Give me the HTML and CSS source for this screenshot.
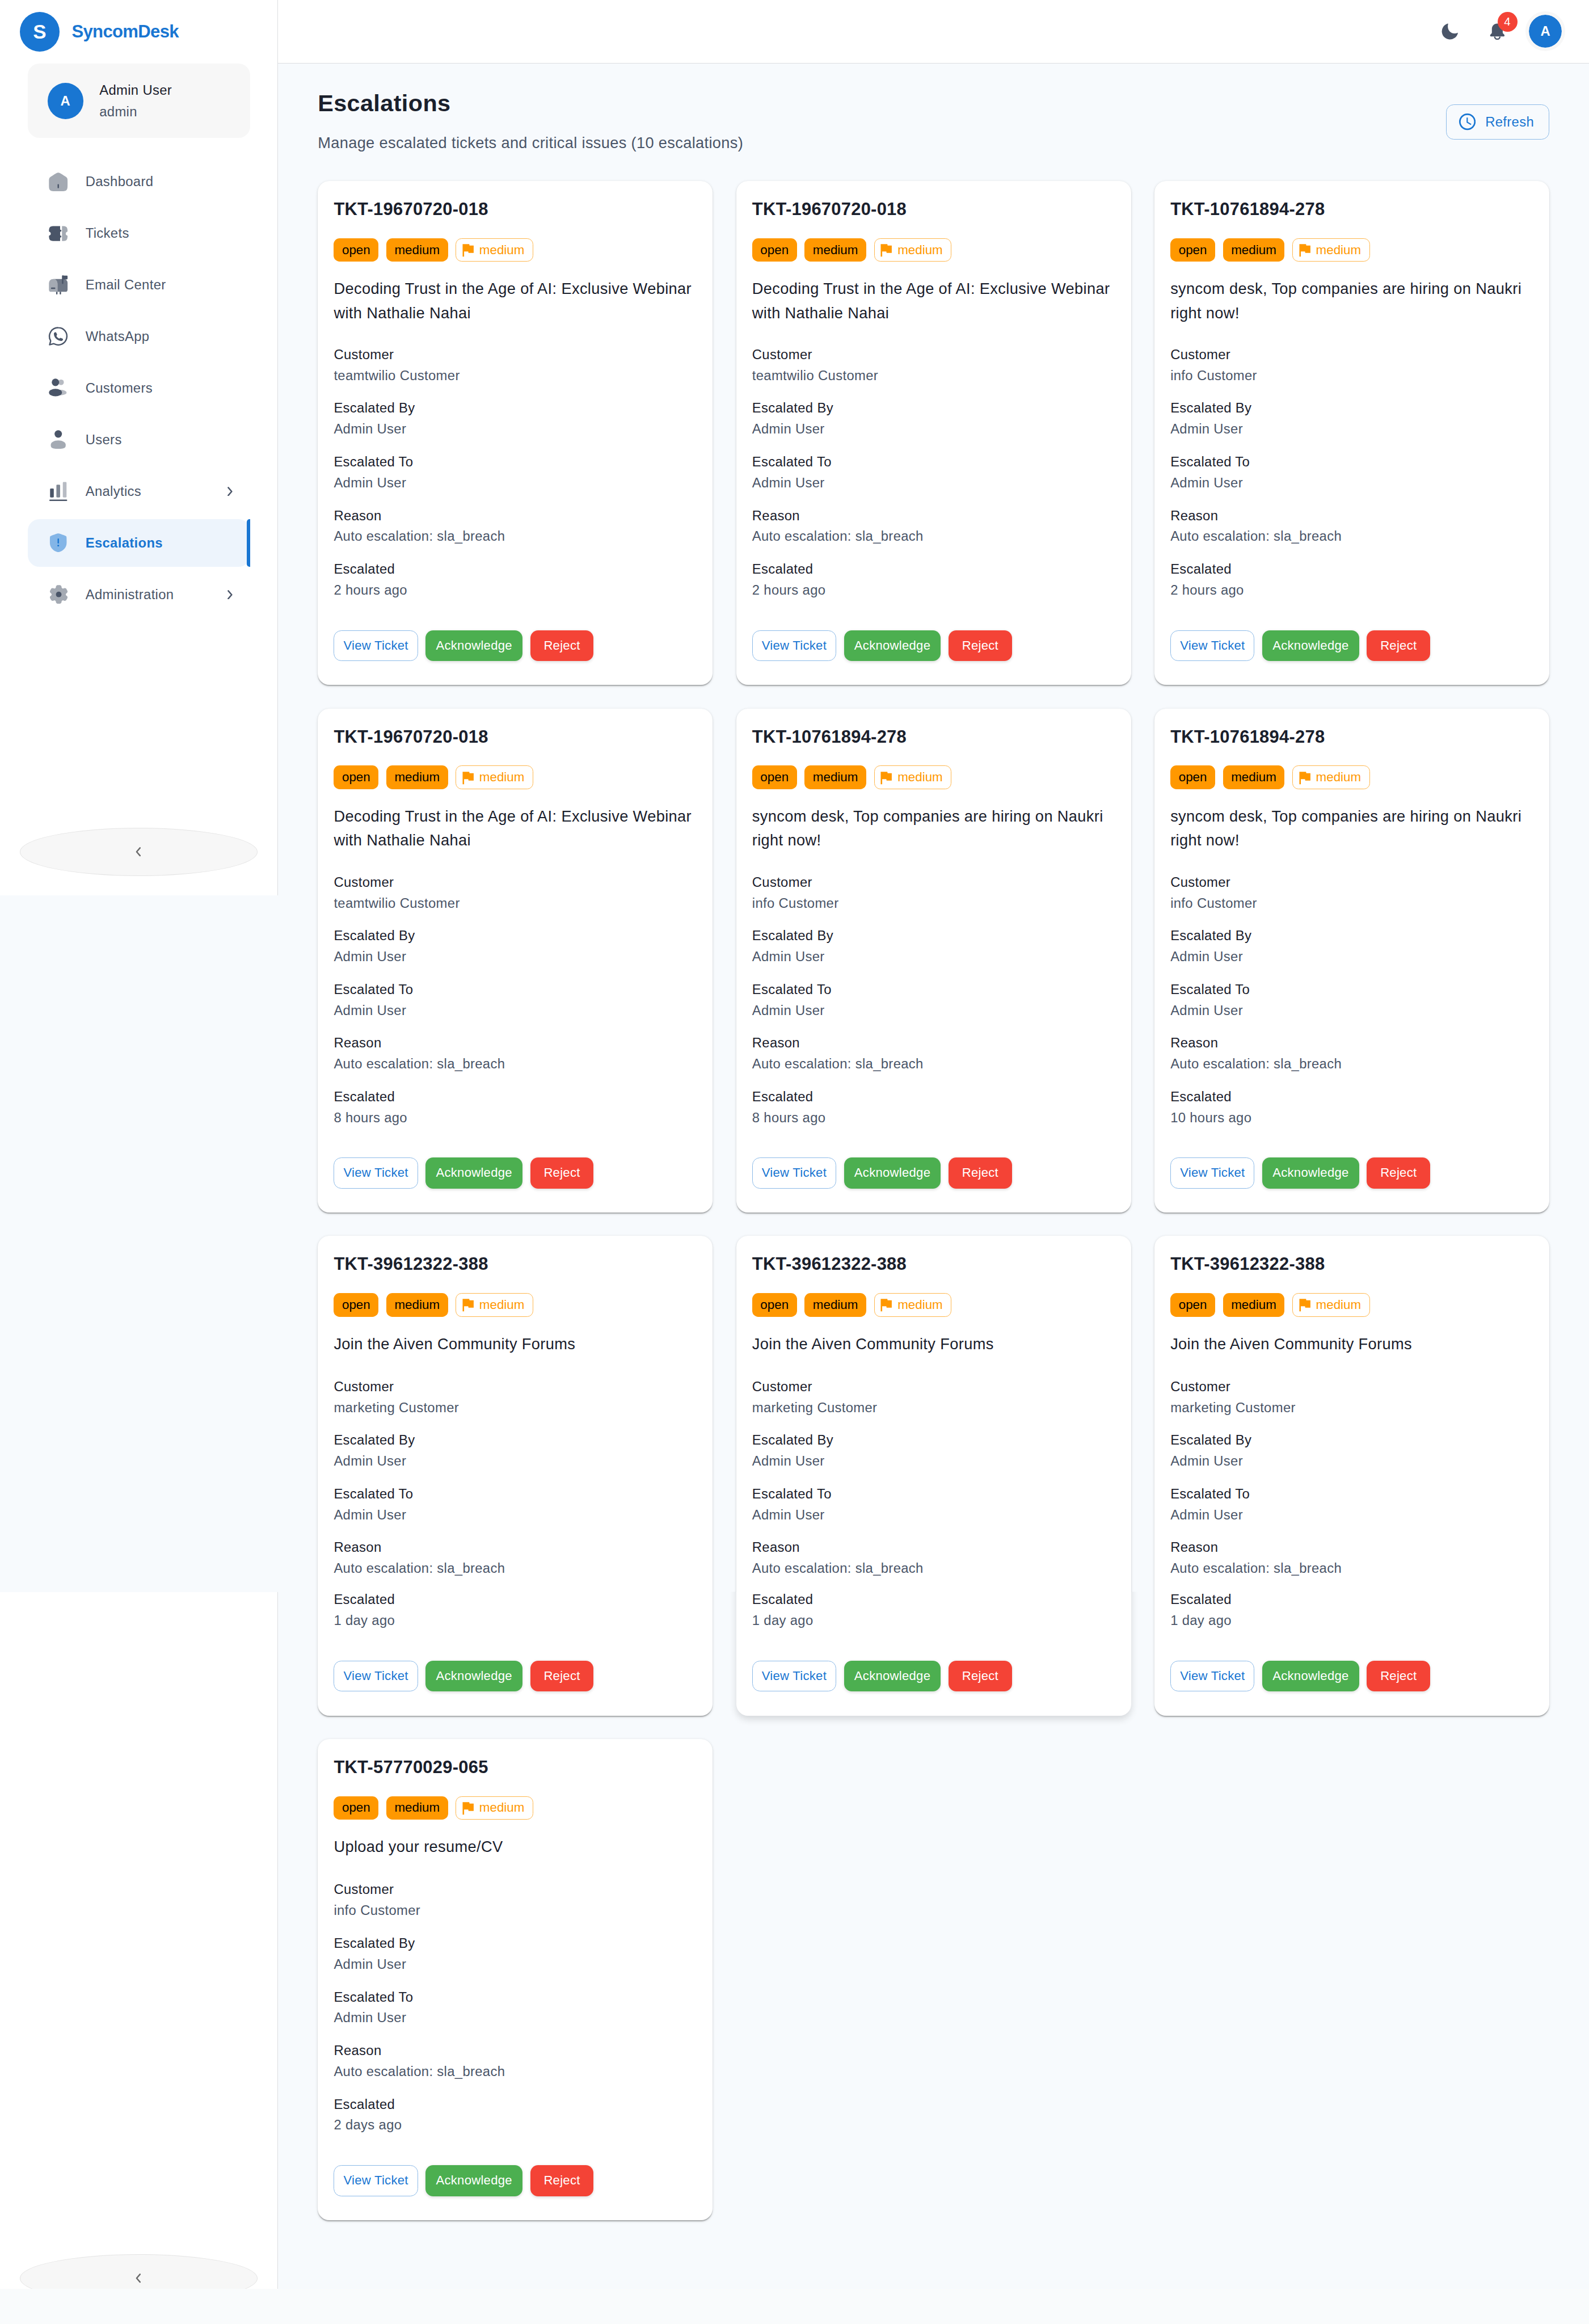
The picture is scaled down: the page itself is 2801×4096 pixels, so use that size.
FILE: index.html
```html
<!DOCTYPE html>
<html lang="en">
<head>
<meta charset="utf-8">
<title>Escalations - SyncomDesk</title>
<link rel="stylesheet" href="styles.css">
</head>
<body>
<svg class="defs" aria-hidden="true">
  <symbol id="flag" viewBox="0 0 24 24"><path fill="currentColor" d="M14.4 6 14 4H5v17h2v-7h5.6l.4 2h7V6z"/></symbol>
  <symbol id="chevron" viewBox="0 0 10 18"><path d="M1.5 1.5 8 9l-6.500 7.500" fill="none" stroke="currentColor" stroke-width="2.700" stroke-linecap="round" stroke-linejoin="round"/></symbol>
</svg>
<div class="app">
  <div class="side-column">
    <aside class="sidebar">
      <div class="brand"><span class="brand-mark">S</span><span class="brand-name">SyncomDesk</span></div>
      <div class="profile">
        <span class="profile-avatar">A</span>
        <div class="profile-text"><div class="profile-name">Admin User</div><div class="profile-role">admin</div></div>
      </div>
      <nav class="nav">
        <a class="nav-item"><svg class="nav-icon" viewBox="0 0 24 24"><path opacity=".5" d="M2 12.204c0-2.289 0-3.433.52-4.381.518-.949 1.467-1.537 3.364-2.715l2-1.241C9.889 2.622 10.892 2 12 2c1.108 0 2.110.622 4.116 1.867l2 1.241c1.897 1.178 2.846 1.766 3.365 2.715.519.948.519 2.092.519 4.380v1.522c0 3.900 0 5.851-1.172 7.063S17.771 22 14 22h-4c-3.771 0-5.657 0-6.828-1.212S2 17.626 2 13.725z"/><path d="M11.250 18a.75.75 0 0 0 1.500 0v-3a.75.75 0 0 0-1.500 0z"/></svg><span>Dashboard</span></a>
        <a class="nav-item"><svg class="nav-icon" viewBox="0 0 24 24"><path d="M14 4H9.500C6 4 4.200 4 3.100 5.100 2.300 5.900 2.100 7.200 2 9.300c0 .4.2.6.5.7A2 2 0 0 1 4 12a2 2 0 0 1-1.500 2c-.3.1-.5.3-.5.7.1 2.100.3 3.400 1.100 4.200C4.200 20 6 20 9.500 20H14v-3.500z"/><circle cx="14.200" cy="8.900" r="1.150"/><circle cx="14.200" cy="15.100" r="1.150"/><path opacity=".5" d="M16 4c2.700 0 4 .2 4.900 1.100.8.8 1 2.100 1.100 4.200 0 .4-.2.6-.5.7A2 2 0 0 0 20 12a2 2 0 0 0 1.500 2c.3.1.5.3.5.7-.1 2.100-.3 3.400-1.100 4.200-.9.9-2.200 1.100-4.900 1.100z"/></svg><span>Tickets</span></a>
        <a class="nav-item"><svg class="nav-icon" viewBox="0 0 24 24"><path opacity=".8" d="M6.500 6H18a4 4 0 0 1 4 4v7c0 2-.8 2.700-2.700 2.700H11.200V11c0-3-1.800-5-4.700-5z"/><path opacity=".5" d="M6.600 6c2.800 0 4.600 2 4.600 4.800v8.900H4.700C2.800 19.700 2 19 2 17v-6.200C2 8 3.800 6 6.600 6z"/><path d="M16 10.500V2.800c0-.5.4-.9.900-.8l1.500.3h2.700c.6 0 .9.3.9.8v2.300c0 .6-.4 1-1 1h-2.200l-1.300-.3v4.400a.75.75 0 0 1-1.500 0zM4.900 15.100h3.200a.75.75 0 0 1 0 1.500H4.900a.75.75 0 0 1 0-1.500zM9.700 19.700h1.500v2.100a.75.75 0 0 1-1.500 0zM13.500 19.700H15v2.100a.75.75 0 0 1-1.500 0z"/></svg><span>Email Center</span></a>
        <a class="nav-item"><svg class="nav-icon" viewBox="0 0 24 24"><path fill="none" stroke="currentColor" stroke-width="1.500" stroke-linejoin="round" d="M12 2.750a9.250 9.250 0 1 1-4.400 17.380c-.3-.15-.6-.2-.95-.1l-3.900 1.050 1-3.650c.1-.35.05-.7-.1-1A9.250 9.250 0 0 1 12 2.750z"/><path d="M7.300 9.300c0-.9.700-1.600 1.500-1.700.5-.1.9.2 1.100.7l.7 1.500c.2.500.1.900-.3 1.300-.3.3-.3.600-.1.900.7 1 1.500 1.800 2.500 2.300.3.200.6.100.900-.2.400-.4.800-.5 1.300-.3l1.600.7c.5.200.7.6.6 1.100-.2.900-.9 1.400-1.900 1.400-4.100 0-7.900-3.700-7.900-7.700z"/></svg><span>WhatsApp</span></a>
        <a class="nav-item"><svg class="nav-icon" viewBox="0 0 24 24"><g opacity=".4"><circle cx="15" cy="6" r="3"/><ellipse cx="14" cy="17" rx="7" ry="3"/></g><circle cx="9" cy="6" r="4"/><ellipse cx="9" cy="17" rx="7" ry="4"/></svg><span>Customers</span></a>
        <a class="nav-item"><svg class="nav-icon" viewBox="0 0 24 24"><circle cx="12" cy="6" r="4"/><path opacity=".5" d="M20 17.500c0 2.485 0 4.500-8 4.500s-8-2.015-8-4.500S7.582 13 12 13s8 2.015 8 4.500"/></svg><span>Users</span></a>
        <a class="nav-item"><svg class="nav-icon" viewBox="0 0 24 24"><rect x="3.200" y="9.200" width="4" height="9.600" rx=".9"/><rect opacity=".7" x="10" y="5" width="4" height="13.800" rx=".9"/><rect opacity=".4" x="16.900" y="2.200" width="4" height="16.600" rx=".9"/><rect x="2.400" y="21" width="19.200" height="1.600" rx=".8"/></svg><span>Analytics</span><svg class="nav-more"><use href="#chevron"/></svg></a>
        <a class="nav-item nav-item-active"><svg class="nav-icon" viewBox="0 0 24 24"><path opacity=".5" d="M3 10.417c0-3.198 0-4.797.378-5.335.377-.537 1.880-1.052 4.887-2.081l.573-.196C10.405 2.268 11.188 2 12 2c.811 0 1.595.268 3.162.805l.573.196c3.007 1.029 4.510 1.544 4.887 2.081C21 5.620 21 7.220 21 10.417v1.574c0 5.638-4.239 8.375-6.899 9.536C13.380 21.842 13.020 22 12 22s-1.380-.158-2.101-.473C7.239 20.365 3 17.630 3 11.991z"/><path d="M12 7.250a.75.75 0 0 1 .75.75v4a.75.75 0 0 1-1.500 0V8a.75.75 0 0 1 .75-.75M12 16a1 1 0 1 0 0-2 1 1 0 0 0 0 2"/></svg><span>Escalations</span></a>
        <a class="nav-item"><svg class="nav-icon" viewBox="0 0 24 24"><path opacity=".5" d="M14.279 2.152C13.909 2 13.439 2 12.500 2s-1.408 0-1.779.152a2 2 0 0 0-1.090 1.083c-.094.223-.13.484-.145.863a1.620 1.620 0 0 1-.796 1.353 1.640 1.640 0 0 1-1.579.008c-.338-.178-.583-.276-.825-.308a2.030 2.030 0 0 0-1.490.396c-.318.242-.553.646-1.022 1.453-.47.807-.704 1.210-.757 1.605-.07.526.074 1.058.4 1.479.148.192.357.353.68.555.477.297.783.803.783 1.361s-.306 1.064-.782 1.360c-.324.203-.533.364-.682.556a2 2 0 0 0-.399 1.479c.053.394.287.798.757 1.605s.704 1.210 1.022 1.453c.424.323.96.465 1.490.396.242-.032.487-.13.825-.308a1.640 1.640 0 0 1 1.580.008c.486.28.774.795.795 1.353.015.38.051.64.145.863.204.49.596.88 1.090 1.083.37.152.84.152 1.779.152s1.409 0 1.779-.152a2 2 0 0 0 1.090-1.083c.094-.223.13-.483.145-.863.020-.558.309-1.074.796-1.353a1.640 1.640 0 0 1 1.579-.008c.338.178.583.276.825.308.53.07 1.066-.073 1.490-.396.318-.242.553-.646 1.022-1.453.47-.807.704-1.210.757-1.605a2 2 0 0 0-.4-1.479c-.148-.192-.357-.353-.68-.555-.477-.297-.783-.803-.783-1.361s.306-1.064.782-1.360c.324-.203.533-.364.682-.556a2 2 0 0 0 .399-1.479c-.053-.394-.287-.798-.757-1.605s-.704-1.210-1.022-1.453a2.030 2.030 0 0 0-1.490-.396c-.242.032-.487.13-.825.308a1.640 1.640 0 0 1-1.580-.008 1.620 1.620 0 0 1-.795-1.353c-.015-.38-.051-.64-.145-.863a2 2 0 0 0-1.090-1.083"/><circle cx="12.500" cy="12" r="3"/></svg><span>Administration</span><svg class="nav-more"><use href="#chevron"/></svg></a>
      </nav>
      <button class="collapse"><svg class="collapse-icon"><use href="#chevron"/></svg></button>
    </aside>
    <aside class="sidebar-tail">
      <button class="collapse"><svg class="collapse-icon"><use href="#chevron"/></svg></button>
    </aside>
  </div>
  <div class="page">
    <header class="topbar">
      <svg class="moon" viewBox="0 0 30 30"><path d="M11.300.5A14.700 14.700 0 1 0 29.600 18.200c.3-.6-.1-1-.7-.8C19.500 21.300 8.900 14 12 1.200c.1-.5-.2-.8-.7-.7z"/></svg>
      <div class="alerts">
        <svg class="bell" viewBox="0 0 28 31"><path d="M14 .5c5.700 0 10 4.300 10 9.700v6.400c0 1.200.4 1.900 1.200 2.700l1.500 1.500c1 1.100.8 3.600-1.200 3.600H2.500c-2 0-2.200-2.500-1.200-3.600l1.500-1.500c.8-.8 1.200-1.500 1.200-2.700v-6.400C4 4.800 8.300.5 14 .5z"/><path d="M9.200 24.500a4.800 4.800 0 0 0 9.600 0" fill="none" stroke="currentColor" stroke-width="2.600"/></svg>
        <span class="alerts-count">4</span>
      </div>
      <span class="user-avatar">A</span>
    </header>
    <main class="content">
      <div class="heading">
        <div>
          <h1 class="heading-title">Escalations</h1>
          <p class="heading-sub">Manage escalated tickets and critical issues (10 escalations)</p>
        </div>
        <button class="refresh"><svg class="refresh-icon" viewBox="0 0 30 30"><circle cx="15" cy="15" r="13.600" stroke-width="2.800"/><path d="M14.700 7.500v8.300l7 4.200" stroke-width="2.200"/></svg><span>Refresh</span></button>
      </div>
      <div class="cards">
        <article class="card">
          <h2 class="card-id">TKT-19670720-018</h2>
          <div class="chips"><span class="chip">open</span><span class="chip">medium</span><span class="chip chip-outline"><svg class="chip-icon"><use href="#flag"/></svg>medium</span></div>
          <p class="card-subject">Decoding Trust in the Age of AI: Exclusive Webinar with Nathalie Nahai</p>
          <dl class="fields"><div><dt>Customer</dt><dd>teamtwilio Customer</dd></div><div><dt>Escalated By</dt><dd>Admin User</dd></div><div><dt>Escalated To</dt><dd>Admin User</dd></div><div><dt>Reason</dt><dd>Auto escalation: sla_breach</dd></div><div><dt>Escalated</dt><dd>2 hours ago</dd></div></dl>
          <div class="actions"><button class="btn btn-view">View Ticket</button><button class="btn btn-ack">Acknowledge</button><button class="btn btn-reject">Reject</button></div>
        </article>
        <article class="card">
          <h2 class="card-id">TKT-19670720-018</h2>
          <div class="chips"><span class="chip">open</span><span class="chip">medium</span><span class="chip chip-outline"><svg class="chip-icon"><use href="#flag"/></svg>medium</span></div>
          <p class="card-subject">Decoding Trust in the Age of AI: Exclusive Webinar with Nathalie Nahai</p>
          <dl class="fields"><div><dt>Customer</dt><dd>teamtwilio Customer</dd></div><div><dt>Escalated By</dt><dd>Admin User</dd></div><div><dt>Escalated To</dt><dd>Admin User</dd></div><div><dt>Reason</dt><dd>Auto escalation: sla_breach</dd></div><div><dt>Escalated</dt><dd>2 hours ago</dd></div></dl>
          <div class="actions"><button class="btn btn-view">View Ticket</button><button class="btn btn-ack">Acknowledge</button><button class="btn btn-reject">Reject</button></div>
        </article>
        <article class="card">
          <h2 class="card-id">TKT-10761894-278</h2>
          <div class="chips"><span class="chip">open</span><span class="chip">medium</span><span class="chip chip-outline"><svg class="chip-icon"><use href="#flag"/></svg>medium</span></div>
          <p class="card-subject">syncom desk, Top companies are hiring on Naukri right now!</p>
          <dl class="fields"><div><dt>Customer</dt><dd>info Customer</dd></div><div><dt>Escalated By</dt><dd>Admin User</dd></div><div><dt>Escalated To</dt><dd>Admin User</dd></div><div><dt>Reason</dt><dd>Auto escalation: sla_breach</dd></div><div><dt>Escalated</dt><dd>2 hours ago</dd></div></dl>
          <div class="actions"><button class="btn btn-view">View Ticket</button><button class="btn btn-ack">Acknowledge</button><button class="btn btn-reject">Reject</button></div>
        </article>
        <article class="card">
          <h2 class="card-id">TKT-19670720-018</h2>
          <div class="chips"><span class="chip">open</span><span class="chip">medium</span><span class="chip chip-outline"><svg class="chip-icon"><use href="#flag"/></svg>medium</span></div>
          <p class="card-subject">Decoding Trust in the Age of AI: Exclusive Webinar with Nathalie Nahai</p>
          <dl class="fields"><div><dt>Customer</dt><dd>teamtwilio Customer</dd></div><div><dt>Escalated By</dt><dd>Admin User</dd></div><div><dt>Escalated To</dt><dd>Admin User</dd></div><div><dt>Reason</dt><dd>Auto escalation: sla_breach</dd></div><div><dt>Escalated</dt><dd>8 hours ago</dd></div></dl>
          <div class="actions"><button class="btn btn-view">View Ticket</button><button class="btn btn-ack">Acknowledge</button><button class="btn btn-reject">Reject</button></div>
        </article>
        <article class="card">
          <h2 class="card-id">TKT-10761894-278</h2>
          <div class="chips"><span class="chip">open</span><span class="chip">medium</span><span class="chip chip-outline"><svg class="chip-icon"><use href="#flag"/></svg>medium</span></div>
          <p class="card-subject">syncom desk, Top companies are hiring on Naukri right now!</p>
          <dl class="fields"><div><dt>Customer</dt><dd>info Customer</dd></div><div><dt>Escalated By</dt><dd>Admin User</dd></div><div><dt>Escalated To</dt><dd>Admin User</dd></div><div><dt>Reason</dt><dd>Auto escalation: sla_breach</dd></div><div><dt>Escalated</dt><dd>8 hours ago</dd></div></dl>
          <div class="actions"><button class="btn btn-view">View Ticket</button><button class="btn btn-ack">Acknowledge</button><button class="btn btn-reject">Reject</button></div>
        </article>
        <article class="card">
          <h2 class="card-id">TKT-10761894-278</h2>
          <div class="chips"><span class="chip">open</span><span class="chip">medium</span><span class="chip chip-outline"><svg class="chip-icon"><use href="#flag"/></svg>medium</span></div>
          <p class="card-subject">syncom desk, Top companies are hiring on Naukri right now!</p>
          <dl class="fields"><div><dt>Customer</dt><dd>info Customer</dd></div><div><dt>Escalated By</dt><dd>Admin User</dd></div><div><dt>Escalated To</dt><dd>Admin User</dd></div><div><dt>Reason</dt><dd>Auto escalation: sla_breach</dd></div><div><dt>Escalated</dt><dd>10 hours ago</dd></div></dl>
          <div class="actions"><button class="btn btn-view">View Ticket</button><button class="btn btn-ack">Acknowledge</button><button class="btn btn-reject">Reject</button></div>
        </article>
        <article class="card card-tight">
          <h2 class="card-id">TKT-39612322-388</h2>
          <div class="chips"><span class="chip">open</span><span class="chip">medium</span><span class="chip chip-outline"><svg class="chip-icon"><use href="#flag"/></svg>medium</span></div>
          <p class="card-subject">Join the Aiven Community Forums</p>
          <dl class="fields"><div><dt>Customer</dt><dd>marketing Customer</dd></div><div><dt>Escalated By</dt><dd>Admin User</dd></div><div><dt>Escalated To</dt><dd>Admin User</dd></div><div><dt>Reason</dt><dd>Auto escalation: sla_breach</dd></div><div><dt>Escalated</dt><dd>1 day ago</dd></div></dl>
          <div class="actions"><button class="btn btn-view">View Ticket</button><button class="btn btn-ack">Acknowledge</button><button class="btn btn-reject">Reject</button></div>
        </article>
        <article class="card card-tight card-raised">
          <h2 class="card-id">TKT-39612322-388</h2>
          <div class="chips"><span class="chip">open</span><span class="chip">medium</span><span class="chip chip-outline"><svg class="chip-icon"><use href="#flag"/></svg>medium</span></div>
          <p class="card-subject">Join the Aiven Community Forums</p>
          <dl class="fields"><div><dt>Customer</dt><dd>marketing Customer</dd></div><div><dt>Escalated By</dt><dd>Admin User</dd></div><div><dt>Escalated To</dt><dd>Admin User</dd></div><div><dt>Reason</dt><dd>Auto escalation: sla_breach</dd></div><div><dt>Escalated</dt><dd>1 day ago</dd></div></dl>
          <div class="actions"><button class="btn btn-view">View Ticket</button><button class="btn btn-ack">Acknowledge</button><button class="btn btn-reject">Reject</button></div>
        </article>
        <article class="card card-tight">
          <h2 class="card-id">TKT-39612322-388</h2>
          <div class="chips"><span class="chip">open</span><span class="chip">medium</span><span class="chip chip-outline"><svg class="chip-icon"><use href="#flag"/></svg>medium</span></div>
          <p class="card-subject">Join the Aiven Community Forums</p>
          <dl class="fields"><div><dt>Customer</dt><dd>marketing Customer</dd></div><div><dt>Escalated By</dt><dd>Admin User</dd></div><div><dt>Escalated To</dt><dd>Admin User</dd></div><div><dt>Reason</dt><dd>Auto escalation: sla_breach</dd></div><div><dt>Escalated</dt><dd>1 day ago</dd></div></dl>
          <div class="actions"><button class="btn btn-view">View Ticket</button><button class="btn btn-ack">Acknowledge</button><button class="btn btn-reject">Reject</button></div>
        </article>
        <article class="card">
          <h2 class="card-id">TKT-57770029-065</h2>
          <div class="chips"><span class="chip">open</span><span class="chip">medium</span><span class="chip chip-outline"><svg class="chip-icon"><use href="#flag"/></svg>medium</span></div>
          <p class="card-subject">Upload your resume/CV</p>
          <dl class="fields"><div><dt>Customer</dt><dd>info Customer</dd></div><div><dt>Escalated By</dt><dd>Admin User</dd></div><div><dt>Escalated To</dt><dd>Admin User</dd></div><div><dt>Reason</dt><dd>Auto escalation: sla_breach</dd></div><div><dt>Escalated</dt><dd>2 days ago</dd></div></dl>
          <div class="actions"><button class="btn btn-view">View Ticket</button><button class="btn btn-ack">Acknowledge</button><button class="btn btn-reject">Reject</button></div>
        </article>
      </div>
    </main>
  </div>
</div>
</body>
</html>
```
FILE: styles.css
```css
/* 1rem is 100 layout units; every size below is expressed in it */
:root {
  font-size: 97.257px;
  --blue: #1976d2;
  --ink: #1a202c;
  --muted: #4a5568;
  --line: #dcdee0;
  --canvas: #f7fafd;
}

* { box-sizing: border-box; margin: 0; padding: 0; }

body {
  background: #f9fbfc;
  color: var(--ink);
  font-family: "Liberation Sans", Arial, Helvetica, sans-serif;
  font-size: 0.245rem;
  letter-spacing: 0.0145em;
  overflow: hidden;
}

button { font: inherit; letter-spacing: inherit; }
svg { display: block; fill: currentColor; flex: none; }
.defs { position: absolute; width: 0; height: 0; }

.app { display: flex; height: 41.48rem; background: var(--canvas); overflow: hidden; }

/* Sidebar */
.side-column { width: 5.04rem; flex: none; display: flex; flex-direction: column; justify-content: space-between; }
.sidebar, .sidebar-tail {
  display: flex;
  flex-direction: column;
  background: #fff;
  border-right: 1px solid var(--line);
}
.sidebar { height: 16.23rem; padding-bottom: 0.355rem; }
.sidebar-tail { height: 12.63rem; padding-top: 12rem; overflow: hidden; }

.brand { height: 1.15rem; padding: 0 0.36rem; display: flex; align-items: center; gap: 0.22rem; flex: none; }
.brand-mark {
  width: 0.72rem; height: 0.72rem; border-radius: 50%;
  display: flex; align-items: center; justify-content: center;
  background: var(--blue); color: #fff; font-size: 0.36rem; font-weight: 700;
}
.brand-name { color: var(--blue); font-size: 0.32rem; font-weight: 700; letter-spacing: -0.022em; }

.profile {
  height: 1.35rem; margin: 0 0.5rem; padding: 0.01rem 0.36rem 0; flex: none;
  display: flex; align-items: center; gap: 0.292rem;
  background: #f7f7f7; border-radius: 0.21rem;
}
.profile-avatar {
  width: 0.65rem; height: 0.65rem; border-radius: 50%;
  display: flex; align-items: center; justify-content: center;
  background: var(--blue); color: #fff; font-weight: 700;
}
.profile-text { line-height: 0.395rem; }
.profile-role { color: var(--muted); }

.nav { padding: 0.36rem 0.5rem 0; display: flex; flex-direction: column; gap: 0.07rem; }
.nav-item {
  height: 0.8655rem; padding: 0 0.31rem 0 0.355rem;
  display: flex; align-items: center; gap: 0.29rem;
  color: var(--muted); border-radius: 0.21rem;
}
.nav-icon { width: 0.405rem; height: 0.405rem; }
.nav-more { width: 0.095rem; height: 0.17rem; margin-left: auto; }
.nav-item-active {
  position: relative;
  color: var(--blue); background: #edf4fc; font-weight: 700;
}
.nav-item-active::after {
  content: "";
  position: absolute; top: 0; right: 0; bottom: 0; width: 0.06rem;
  background: var(--blue); border-radius: 0.05rem 0 0 0.05rem;
}

.collapse {
  width: 4.31rem; height: 0.87rem; margin: auto 0 0 0.36rem; flex: none;
  display: flex; align-items: center; justify-content: center;
  background: #f7f7f7; border: 1px solid #e4e4e4; border-radius: 50%;
  color: #6b6b6b;
}
.sidebar-tail .collapse { margin-top: 0; }
.collapse-icon { width: 0.095rem; height: 0.17rem; margin-right: 0.015rem; transform: scaleX(-1); }

/* Top bar */
.page { flex: 1; min-width: 0; }
.topbar {
  height: 1.15rem; padding-right: 0.43rem;
  display: flex; align-items: center; justify-content: flex-end;
  background: #fff; border-bottom: 1px solid var(--line); color: var(--muted);
}
.moon { width: 0.3rem; height: 0.3rem; margin-right: 0.577rem; }
.alerts { position: relative; margin-right: 0.37rem; }
.bell { width: 0.275rem; height: 0.305rem; }
.alerts-count {
  position: absolute; left: 0.135rem; top: -0.205rem;
  width: 0.36rem; height: 0.36rem; border-radius: 50%;
  display: flex; align-items: center; justify-content: center;
  background: #f44336; color: #fff; font-size: 0.21rem;
}
.user-avatar {
  width: 0.72rem; height: 0.72rem; border-radius: 50%;
  display: flex; align-items: center; justify-content: center;
  background: var(--blue); background-clip: padding-box;
  border: 0.065rem solid #f7f7f7; color: #fff; font-weight: 700;
}

/* Page heading */
.content { padding: 0 0.72rem; }
.heading { height: 2.13rem; padding-top: 0.42rem; display: flex; justify-content: space-between; align-items: flex-start; }
.heading-title { font-size: 0.425rem; line-height: 0.6rem; letter-spacing: 0.01em; }
.heading-sub { margin-top: 0.215rem; font-size: 0.28rem; line-height: 0.42rem; letter-spacing: 0.0125em; color: var(--muted); }
.refresh {
  height: 0.64rem; width: 1.87rem; margin-top: 0.32rem; padding-left: 0.22rem;
  display: flex; align-items: center; gap: 0.18rem;
  background: transparent; border: 1px solid #8cbae8; border-radius: 0.14rem; color: var(--blue);
}
.refresh-icon { width: 0.3rem; height: 0.3rem; fill: none; stroke: currentColor; }

/* Cards */
.cards { display: grid; grid-template-columns: repeat(3, 1fr); gap: 0.425rem; align-items: start; }
.card {
  padding: 0.3rem 0.29rem 0.435rem;
  background: #fff; border-radius: 0.21rem;
  box-shadow: 0 0.04rem 0.02rem -0.02rem rgba(0,0,0,.17), 0 0.02rem 0.02rem rgba(0,0,0,.12), 0 0.02rem 0.06rem rgba(0,0,0,.12);
}
.card-id { font-size: 0.318rem; line-height: 0.44rem; letter-spacing: 0.0085em; }
.chips { display: flex; gap: 0.14rem; margin-top: 0.295rem; }
.chip {
  height: 0.43rem; padding: 0 0.15rem; border-radius: 0.11rem;
  display: flex; align-items: center;
  background: #ff9800; color: #000; font-size: 0.23rem; letter-spacing: 0;
}
.chip-outline { padding-left: 0.05rem; background: none; border: 1px solid #ffb74d; color: #ff9800; }
.chip-icon { width: 0.32rem; height: 0.32rem; margin-right: 0.048rem; }
.card-subject { min-height: 0.455rem; margin-top: 0.277rem; font-size: 0.28rem; line-height: 0.435rem; letter-spacing: 0.0135em; }

.fields { margin-top: 0.349rem; display: flex; flex-direction: column; gap: 0.212rem; line-height: 0.38rem; }
.fields dd { color: var(--muted); }
.card-tight .fields > :last-child { margin-top: -0.028rem; }

.actions { display: flex; gap: 0.14rem; margin-top: 0.531rem; }
.btn {
  height: 0.56rem; min-width: 1.15rem; padding: 0;
  border: 0; border-radius: 0.14rem; color: #fff; font-size: 0.2275rem; letter-spacing: 0.012em;
  box-shadow: 0 0.02rem 0.06rem rgba(0,0,0,.14);
}
.btn-view { min-width: 1.525rem; background: none; border: 1px solid #8cbae8; color: var(--blue); box-shadow: none; }
.btn-ack { min-width: 1.755rem; background: #4caf50; }
.btn-reject { background: #f44336; }

/* Raised card: the wide soft shadow shows on its lower part only */
.card-raised { position: relative; box-shadow: none; }
.card-raised::before, .card-raised::after { content: ""; position: absolute; inset: 0; border-radius: inherit; pointer-events: none; }
.card-raised::before {
  box-shadow: 0 0.04rem 0.02rem -0.02rem rgba(0,0,0,.17), 0 0.02rem 0.02rem rgba(0,0,0,.12), 0 0.02rem 0.06rem rgba(0,0,0,.12);
  clip-path: inset(-0.2rem -0.2rem 2.24rem -0.2rem);
}
.card-raised::after {
  box-shadow: 0 0.06rem 0.13rem rgba(0,0,0,.14);
  clip-path: inset(6.45rem -0.4rem -0.4rem -0.4rem);
}
```
